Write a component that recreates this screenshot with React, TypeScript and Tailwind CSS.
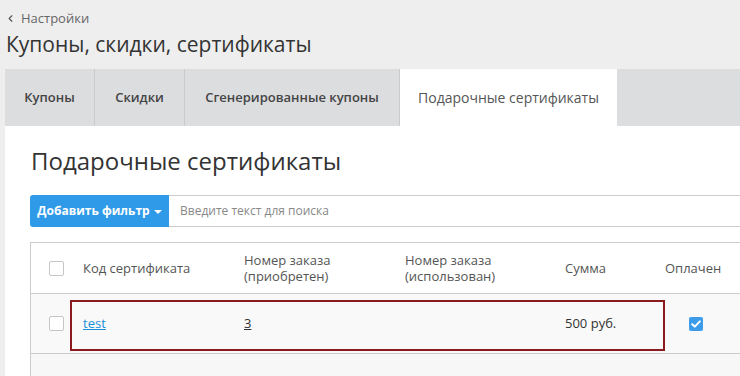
import { ChevronLeft } from 'lucide-react'

const tabs = ['Купоны', 'Скидки', 'Сгенерированные купоны']

export default function App() {
  return (
    <div className="w-[740px] h-[376px] overflow-hidden bg-[#eeeeee] font-['Open_Sans',sans-serif]">
      <div className="pl-[5px] pt-[9px]">
        <div className="flex items-center gap-[5px] text-[13px] leading-[18px] text-[#666666]">
          <ChevronLeft size={11} strokeWidth={2.5} className="text-[#555555]" />
          <span>Настройки</span>
        </div>
        <h1 className="mt-[2px] pl-[1px] text-[21px] leading-[30px] text-[#333333]">Купоны, скидки, сертификаты</h1>
      </div>

      <div className="ml-[5px] mt-[10px] w-[800px]">
        <div className="flex h-[57px] bg-[#dcdddf]">
          {tabs.map((t, i) => (
            <div
              key={t}
              className={`flex items-center justify-center text-[13px] font-semibold text-[#444444] border-r border-[#c9cacc] ${i === 2 ? 'w-[215px]' : 'w-[90px]'}`}
            >
              {t}
            </div>
          ))}
          <div className="flex w-[217px] items-center justify-center bg-white text-[14px] text-[#555555]">
            Подарочные сертификаты
          </div>
        </div>

        <div className="bg-white pl-[25px] pt-[20px] h-[260px]">
          <h2 className="text-[24px] leading-[30px] text-[#333333] pl-[1px]">Подарочные сертификаты</h2>

          <div className="mt-[19px] flex h-[32px]">
            <button className="flex w-[139px] items-center justify-center gap-[4px] rounded-l-[3px] bg-[#2f9ae8] text-[12px] font-bold text-white">
              Добавить фильтр
              <span className="mt-[1px] border-x-[4px] border-t-[4px] border-x-transparent border-t-white" />
            </button>
            <div className="flex flex-1 items-center border-y border-r border-[#cccccc] pl-[11px] text-[12px] text-[#888888]">
              Введите текст для поиска
            </div>
          </div>

          <div className="relative mt-[15px] border-t border-l border-[#cccccc]">
            <div className="flex h-[51px] items-center border-b border-[#cccccc] text-[13px] leading-[16px] text-[#555555]">
              <div className="w-[52px] pl-[18px]">
                <span className="block h-[15px] w-[15px] rounded-[2px] border border-[#c6c6c6] bg-white" />
              </div>
              <div className="w-[161px]">Код сертификата</div>
              <div className="w-[161px]">Номер заказа<br />(приобретен)</div>
              <div className="w-[160px]">Номер заказа<br />(использован)</div>
              <div className="w-[100px]">Сумма</div>
              <div>Оплачен</div>
            </div>
            <div className="flex h-[60px] items-center border-b border-[#cccccc] bg-[#f9f9f9] text-[13px] text-[#333333]">
              <div className="w-[52px] pl-[18px]">
                <span className="block h-[15px] w-[15px] rounded-[2px] border border-[#c6c6c6] bg-white" />
              </div>
              <div className="w-[161px]">
                <a className="text-[#1a8fd9] underline">test</a>
              </div>
              <div className="w-[161px]">
                <span className="underline">3</span>
              </div>
              <div className="w-[160px]" />
              <div className="w-[100px]">500 руб.</div>
              <div className="pl-[24px]">
                <span className="flex h-[14px] w-[14px] items-center justify-center rounded-[2px] bg-[#3d9cea]">
                  <svg width="10" height="8" viewBox="0 0 10 8">
                    <path d="M1.2 4.2 L3.8 6.6 L8.8 1.4" fill="none" stroke="white" strokeWidth="2" strokeLinecap="round" strokeLinejoin="round" />
                  </svg>
                </span>
              </div>
            </div>
            <div className="h-[30px] bg-[#f7f7f7]" />
            <div className="absolute left-[39px] top-[57px] h-[51px] w-[595px] border-2 border-[#8b1a1e]" />
          </div>
        </div>
      </div>
    </div>
  )
}
